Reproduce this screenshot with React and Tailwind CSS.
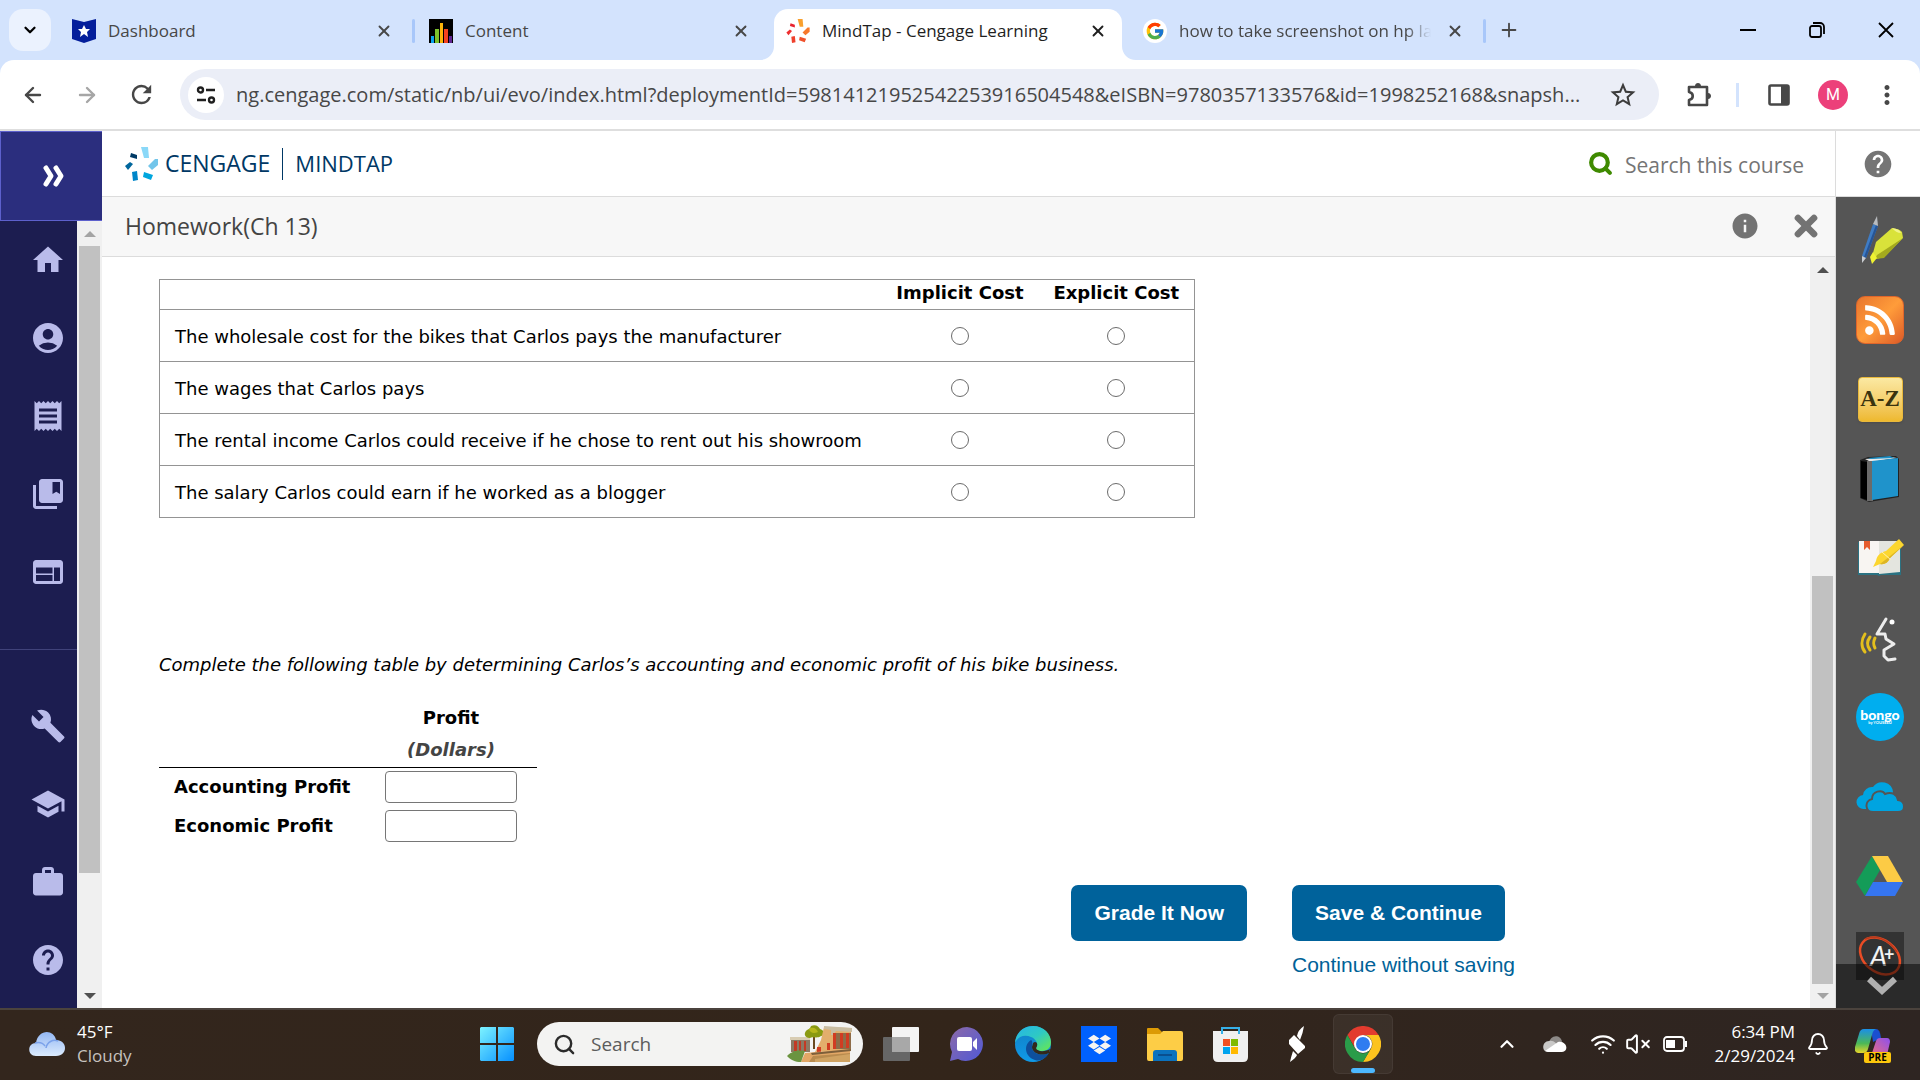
import { ArrowLeft, ArrowRight, Bell, ChevronDown, ChevronUp, Plus, Search, VolumeX, Wifi, X } from "lucide-react";
import {
  MdAccountCircle,
  MdBuild,
  MdCollectionsBookmark,
  MdHelp,
  MdHome,
  MdInfo,
  MdMoreVert,
  MdOutlineExtension,
  MdReceipt,
  MdRefresh,
  MdSchool,
  MdStarBorder,
  MdWeb,
  MdWork,
} from "react-icons/md";
import { FcGoogle } from "react-icons/fc";
import { FaDropbox, FaRss } from "react-icons/fa";

const COSTS = [
  "The wholesale cost for the bikes that Carlos pays the manufacturer",
  "The wages that Carlos pays",
  "The rental income Carlos could receive if he chose to rent out his showroom",
  "The salary Carlos could earn if he worked as a blogger",
];

const CengageMark = ({ colors, className }) => (
  <svg viewBox="0 0 33 34" className={className}>
    <path d="M16 0h7l1 11h-5z" fill={colors[0]} />
    <path d="M33 12v6l-6 5-4-4 7-7z" fill={colors[1]} />
    <path d="M19 25l9 3-2 5-8-3z" fill={colors[2]} />
    <path d="M7 25l5-1 1 9-5 1z" fill={colors[3]} />
    <path d="M0 19l5-4 3 2-5 6z" fill={colors[4]} />
    <path d="M6 6l6 2v4l-7-2z" fill={colors[5]} />
  </svg>
);

const ORANGES = ["#f9a02e", "#f7782b", "#f0512b", "#ef402c", "#ee2f30", "#e8212f"];
const BLUES = ["#8ad8f8", "#72c5ea", "#00a6de", "#0086c9", "#00669c", "#003a66"];

const ShieldIcon = () => (
  <svg viewBox="0 0 24 24" className="size-6">
    <path d="M0 0l12 3 12-3v20l-12 4-12-4z" fill="#041e9b" />
    <path d="M12 6l2 4h4l-3 3 1 5-4-3-4 3 1-5-3-3h4z" fill="#fff" />
  </svg>
);

const BarsIcon = () => (
  <svg viewBox="0 0 24 24" className="size-6">
    <path d="M0 0h24v24H0z" fill="#000" />
    <path d="M2 17h3v7H2z" fill="#0aa1ec" />
    <path d="M6 10h4v14H6z" fill="#7cc12c" />
    <path d="M11 4h3v20h-3z" fill="#fcb40a" />
    <path d="M15 10h4v14h-4z" fill="#f4421f" />
    <path d="M20 17h3v7h-3z" fill="#5f2590" />
  </svg>
);

const Flare = ({ className, d }) => (
  <svg viewBox="0 0 14 14" className={className}>
    <path d={d} fill="#fff" />
  </svg>
);

const Tab = ({ icon, title, active, separator, fade }) => (
  <div
    className={
      active
        ? "relative flex items-center w-[348px] mr-[9px] h-[51px] mt-[9px] pb-[8px] pl-3 bg-white rounded-t-[14px] text-[#1f1f1f]"
        : "relative flex items-center w-[357px] h-[51px] mt-[9px] pb-[8px] pl-3 text-[#474747]"
    }
  >
    {active && (
      <>
        <Flare className="absolute -left-[14px] bottom-0 size-[14px]" d="M14 0v14H0C8 14 14 8 14 0z" />
        <Flare className="absolute -right-[14px] bottom-0 size-[14px]" d="M0 0v14h14C6 14 0 8 0 0z" />
      </>
    )}
    {icon}
    <button
      className={`mx-3 text-left text-[17px] leading-6 whitespace-nowrap w-[252px] ${
        fade ? "[mask-image:linear-gradient(to_right,black_90%,transparent)]" : ""
      }`}
    >
      {title}
    </button>
    <button aria-label={`Close ${title}`} className="size-6 shrink-0 flex items-center justify-center">
      <X size={18} strokeWidth={2.5} />
    </button>
    {separator && <span className="ml-4 w-[3px] h-6 rounded-sm bg-[#a8c7fa]" />}
  </div>
);

const TabStrip = () => (
  <div className="flex h-[60px] shrink-0 bg-[#d3e3fd]">
    <button aria-label="Search tabs" className="m-[9px] size-[42px] shrink-0 rounded-[14px] bg-[#ebf2fe] flex items-center justify-center">
      <ChevronDown size={18} strokeWidth={3} />
    </button>
    <Tab icon={<ShieldIcon />} title="Dashboard" separator />
    <Tab icon={<BarsIcon />} title="Content" />
    <Tab icon={<CengageMark colors={ORANGES} className="size-6" />} title="MindTap - Cengage Learning" active />
    <Tab
      icon={
        <span className="size-6 shrink-0 rounded-full bg-white flex items-center justify-center">
          <FcGoogle size={20} />
        </span>
      }
      title="how to take screenshot on hp la"
      separator
      fade
    />
    <button aria-label="New tab" className="w-[42px] flex items-center justify-center text-[#474747]">
      <Plus size={22} />
    </button>
    <div className="ml-auto flex">
      <button aria-label="Minimize" className="w-[69px] flex items-center justify-center">
        <span className="w-4 h-[2px] bg-black" />
      </button>
      <button aria-label="Restore" className="w-[69px] flex items-center justify-center">
        <svg viewBox="0 0 16 16" className="size-4" fill="none" stroke="#000" strokeWidth="1.8">
          <rect x="1" y="4" width="11" height="11" rx="2" />
          <path d="M4 1h7a4 4 0 0 1 4 4v7" />
        </svg>
      </button>
      <button aria-label="Close window" className="w-[69px] flex items-center justify-center">
        <svg viewBox="0 0 16 16" className="size-4" stroke="#000" strokeWidth="1.8">
          <path d="M1 1l14 14M15 1L1 15" />
        </svg>
      </button>
    </div>
  </div>
);

const ToolButton = ({ label, children }) => (
  <button aria-label={label} className="w-[54px] h-full shrink-0 flex items-center justify-center text-[#474747]">
    {children}
  </button>
);

const Toolbar = () => (
  <div className="shrink-0 bg-[#d3e3fd]">
    <div className="flex items-center h-[71px] px-[6px] bg-white rounded-t-[14px] border-b-2 border-[#dedede]">
      <ToolButton label="Back"><ArrowLeft size={24} strokeWidth={2.4} /></ToolButton>
      <ToolButton label="Forward"><ArrowRight size={24} strokeWidth={2.4} className="text-[#a6a6a6]" /></ToolButton>
      <ToolButton label="Reload"><MdRefresh size={29} /></ToolButton>
      <div className="ml-3 flex flex-1 min-w-0 items-center h-[51px] rounded-full bg-[#ebeef7] pl-2 pr-[21px]">
        <button aria-label="Site information" className="size-9 shrink-0 rounded-full bg-white flex items-center justify-center">
          <svg viewBox="0 0 20 20" className="size-5" fill="none" stroke="#1f1f1f" strokeWidth="2.4">
            <circle cx="4.500" cy="5" r="2.500" />
            <path d="M10 5h9M1 15h9" />
            <circle cx="15.500" cy="15" r="2.500" />
          </svg>
        </button>
        <input
          aria-label="Address"
          readOnly
          className="ml-3 flex-1 min-w-0 bg-transparent text-xl text-[#474747] outline-none"
          value="ng.cengage.com/static/nb/ui/evo/index.html?deploymentId=59814121952542253916504548&eISBN=9780357133576&id=1998252168&snapsh..."
        />
        <button aria-label="Bookmark this tab" className="shrink-0 text-[#3c3c3c]"><MdStarBorder size={30} /></button>
      </div>
      <div className="ml-[13px] flex h-full items-center">
        <ToolButton label="Extensions">
          <svg viewBox="0 0 26 26" className="size-[26px]" fill="none" stroke="#474747" strokeWidth="2.600" strokeLinejoin="round">
            <path d="M3 5h18v18H3v-5c5-1 5-7 0-8z" />
            <path d="M9 4c0-4 6-4 6 0zM22 11c4 0 4 6 0 6z" fill="#474747" stroke="none" />
          </svg>
        </ToolButton>
        <span className="ml-[10px] mr-[13px] w-[3px] h-6 bg-[#d3e3fd]" />
        <ToolButton label="Side panel">
          <svg viewBox="0 0 22 22" className="size-[22px]">
            <rect x="1.500" y="1.500" width="19" height="19" rx="1.500" fill="none" stroke="#474747" strokeWidth="2.600" />
            <path d="M13 1h8v20h-8z" fill="#474747" />
          </svg>
        </ToolButton>
        <ToolButton label="Profile">
          <span className="size-[30px] rounded-full bg-[#ec407a] text-white text-base flex items-center justify-center font-[Roboto,sans-serif]">M</span>
        </ToolButton>
        <ToolButton label="Menu"><MdMoreVert size={30} /></ToolButton>
      </div>
    </div>
  </div>
);

const RailItem = ({ label, icon: Icon }) => (
  <button aria-label={label} className="flex h-[78px] w-full shrink-0 items-center justify-center pl-[19px] text-[#b9bbea]">
    <Icon size={36} />
  </button>
);

const ScrollTrack = ({ className = "", thumb, upColor, downColor }) => (
  <div className={`flex w-[25px] shrink-0 flex-col bg-[#f0f0f0] px-[2px] ${className}`}>
    <div className="flex h-[25px] shrink-0 items-center justify-center">
      <svg viewBox="0 0 12 6" className="w-3 h-[6px]"><path d="M0 6l6-6 6 6z" fill={upColor} /></svg>
    </div>
    <div className={`flex flex-1 flex-col min-h-0 ${thumb}`}>
      <div className="bg-[#c1c1c1] h-full" />
    </div>
    <div className="flex h-6 shrink-0 items-center justify-center">
      <svg viewBox="0 0 12 6" className="w-3 h-[6px]"><path d="M0 0l6 6 6-6z" fill={downColor} /></svg>
    </div>
  </div>
);

const CourseRail = () => (
  <aside className="flex w-[102px] shrink-0 flex-col">
    <button aria-label="Expand navigation" className="h-[90px] shrink-0 bg-[#2b2e7e] border border-[#5d60cc] border-r-0 flex items-center justify-center">
      <svg viewBox="0 0 24 24" className="ml-1 size-6" fill="none" stroke="#fff" strokeWidth="5" strokeLinecap="round" strokeLinejoin="round">
        <path d="M4 4l5 8-5 8M14 4l5 8-5 8" />
      </svg>
    </button>
    <div className="flex flex-1 min-h-0">
      <nav className="flex-1 overflow-hidden bg-[#1c1d50]">
        <RailItem label="Home" icon={MdHome} />
        <RailItem label="Account" icon={MdAccountCircle} />
        <RailItem label="Orders" icon={MdReceipt} />
        <RailItem label="Library" icon={MdCollectionsBookmark} />
        <RailItem label="Dashboard" icon={MdWeb} />
        <hr className="mt-[38px] mb-[37px] border-[#40427a]" />
        <RailItem label="Tools" icon={MdBuild} />
        <RailItem label="College success" icon={MdSchool} />
        <RailItem label="Career" icon={MdWork} />
        <RailItem label="Help" icon={MdHelp} />
      </nav>
      <ScrollTrack thumb="pb-[111px]" upColor="#a3a3a3" downColor="#505050" />
    </div>
  </aside>
);

const CostTable = () => (
  <table className="w-[1036px] table-fixed border-collapse border border-[#949494]">
    <thead>
      <tr className="h-[30px] border-b border-[#949494]">
        <th className="w-[722px]" />
        <th className="w-[157px] pb-1 leading-6">Implicit Cost</th>
        <th className="pb-1 leading-6">Explicit Cost</th>
      </tr>
    </thead>
    <tbody>
      {COSTS.map((cost) => (
        <tr key={cost} className="h-[52px] border-b border-[#949494]">
          <td className="pl-[15px] pt-[2px] whitespace-nowrap">{cost}</td>
          {["Implicit Cost", "Explicit Cost"].map((kind) => (
            <td key={kind} className="text-center">
              <input
                type="radio"
                name={cost}
                aria-label={`${kind}: ${cost}`}
                className="mx-auto block size-[18px] appearance-none rounded-full border border-[#6b6b6b] bg-white"
              />
            </td>
          ))}
        </tr>
      ))}
    </tbody>
  </table>
);

const ProfitTable = () => (
  <table className="mt-[22px] w-[378px] table-fixed border-collapse">
    <thead>
      <tr className="h-[33px]">
        <th className="w-[206px]" />
        <th>Profit</th>
      </tr>
      <tr className="h-[33px] border-b border-black">
        <th />
        <th className="italic text-[#444]">(Dollars)</th>
      </tr>
    </thead>
    <tbody>
      {["Accounting Profit", "Economic Profit"].map((name) => (
        <tr key={name} className="h-[39px]">
          <th className="pl-[15px] text-left whitespace-nowrap">
            <label htmlFor={name}>{name}</label>
          </th>
          <td>
            <input id={name} type="text" className="mx-auto block h-8 w-[132px] rounded-[4px] border border-[#767676] px-2" />
          </td>
        </tr>
      ))}
    </tbody>
  </table>
);

const Homework = () => (
  <div className="flex flex-1 min-h-0">
    <div className="flex-1 min-w-0 overflow-hidden pl-[57px] pt-[22px] text-lg leading-7 text-black font-['DejaVu_Sans',Verdana,sans-serif]">
      <CostTable />
      <p className="mt-[133px] italic">
        Complete the following table by determining Carlos’s accounting and economic profit of his bike business.
      </p>
      <ProfitTable />
      <div className="mt-10 flex max-w-[1356px] justify-end gap-[45px] text-[21px] font-['Liberation_Sans',Arial,sans-serif]">
        <button className="h-14 rounded-[7px] bg-[#00629b] px-[23px] font-bold text-white">Grade It Now</button>
        <div className="flex flex-col items-start">
          <button className="h-14 rounded-[7px] bg-[#00629b] px-[23px] font-bold text-white">Save &amp; Continue</button>
          <a href="#" className="mt-[10px] text-[#006298]">Continue without saving</a>
        </div>
      </div>
    </div>
    <ScrollTrack thumb="pt-[294px]" upColor="#505050" downColor="#a3a3a3" />
  </div>
);

const CourseHeader = () => (
  <header className="flex h-[66px] shrink-0 items-center border-b border-[#dcdcdc] pl-[23px] pr-[24px]">
    <CengageMark colors={BLUES} className="h-[34px] w-[33px]" />
    <span className="ml-[7px] text-[23px] font-medium text-[#003865]">CENGAGE</span>
    <span className="mx-3 h-8 w-px bg-[#003865]" />
    <span className="text-[22px] font-medium text-[#003865]">MINDTAP</span>
    <div className="ml-auto flex items-center">
      <Search size={25} strokeWidth={4} color="#3f8a00" />
      <input
        type="text"
        aria-label="Search this course"
        placeholder="Search this course"
        className="ml-[12px] w-[186px] pt-1 text-[21px] placeholder:text-[#757575] outline-none"
      />
    </div>
  </header>
);

const ActivityBar = () => (
  <div className="flex h-[60px] shrink-0 items-center border-b border-[#dcdcdc] bg-[#f7f7f7] pb-px pl-[23px] pr-[13px]">
    <h1 className="text-[23px] text-[#444]">Homework(Ch 13)</h1>
    <button aria-label="Activity information" className="ml-auto text-[#737373]"><MdInfo size={30} /></button>
    <button aria-label="Close activity" className="ml-[30px] text-[#737373]"><X size={32} strokeWidth={5} /></button>
  </div>
);

const PenIcon = () => (
  <svg viewBox="0 0 48 48" className="size-12">
    <path d="M17 8l5 2L10 42l-4-2z" fill="#3f7cc4" />
    <path d="M20 9l2 1-12 32-2-1z" fill="#275596" />
    <path d="M17 8l4-8 1 10z" fill="#b9bcc0" />
    <path d="M6 40l4 2-4 5z" fill="#c9ccd0" />
    <path d="M36 12q8 1 10 4l1 6-19 19-8 2-3-6 3-11z" fill="#d9e23a" />
    <path d="M47 22L28 42l-9 1 2-4z" fill="#a4aa1e" />
    <path d="M36 12q8 1 9 5-5 0-9-5z" fill="#f0f38a" />
    <path d="M17 36l4 6-5 6-2-7z" fill="#eff232" />
  </svg>
);

const BookIcon = () => (
  <svg viewBox="0 0 48 48" className="size-12">
    <path d="M4 5l8-3 28-1 3 3v38L13 47l-9-4z" fill="#222" />
    <path d="M9 4l26-2 6 1-26 4z" fill="#e9e9e9" />
    <path d="M12 3l22-2 4 2-23 1z" fill="#1e8fc4" />
    <path d="M11 6h6v40h-6z" fill="#6a6a6a" />
    <path d="M16 6l26-3v38l-26 4z" fill="#1f93cb" />
    <path d="M5 6l6 1v38l-6-2z" fill="#000" />
  </svg>
);

const NoteIcon = () => (
  <svg viewBox="0 0 48 48" className="size-12">
    <path d="M2 8h43v33H25l-2 1-2-1H2z" fill="#2b7282" />
    <path d="M3 7h20v32H3z" fill="#f8f5f2" />
    <path d="M23 7h21v31l-21 2z" fill="#e4e5df" />
    <path d="M8 7h6v9l-3-3-3 3z" fill="#e65c2d" />
    <path d="M43 5l5 6-14 13c-2 5-6 7-10 6l-7 3 3-6c1-6 5-9 10-10z" fill="#fcd62f" />
    <path d="M48 11L34 24c-2 5-6 7-10 6z" fill="#dcb526" />
    <path d="M26 18l9 8" stroke="#fff3b0" />
  </svg>
);

const SpeakIcon = () => (
  <svg viewBox="0 0 48 48" className="size-12" fill="none" strokeLinecap="round">
    <path d="M30 5l-9 15h8l1 5 8 5-10 6v6l4 4 7-1" stroke="#ececec" strokeWidth="3" strokeLinejoin="round" />
    <circle cx="36" cy="8" r="2.500" fill="#fff" />
    <path d="M9 20c-4 6-4 13 0 18M14 23c-3 4-3 9 0 13M19 24c-2 4-2 6 0 10" stroke="#e3bf1d" strokeWidth="3" />
  </svg>
);

const CloudsIcon = () => (
  <svg viewBox="0 0 48 48" className="size-12">
    <path d="M8 36a7 7 0 0 1-1-14 9 9 0 0 1 10-8 11 11 0 0 1 20 5L27 36z" fill="#00a4e0" />
    <path d="M17 39c-8 0-9-11-1-13 0-8 10-10 13-5 7-3 12 1 13 6 8 1 8 12 0 12z" fill="#00a4e0" stroke="#555" strokeWidth="2" />
  </svg>
);

const DriveIcon = () => (
  <svg viewBox="0 0 48 48" className="size-12">
    <path d="M16 4l8 14L9 44 0 30z" fill="#149c58" />
    <path d="M16 4h16l15 26H31z" fill="#fccb45" />
    <path d="M17 30h30l-8 14H9z" fill="#3575f0" />
  </svg>
);

const GradeIcon = () => (
  <svg viewBox="0 0 48 48" className="size-12 bg-[#333]">
    <ellipse cx="24" cy="24" rx="22" ry="16" transform="rotate(38 24 24)" fill="none" stroke="#e84c25" strokeWidth="2.500" />
    <path d="M9 7c12-5 24 1 32 13" fill="none" stroke="#b93a1c" strokeWidth="1.500" />
    <text x="14" y="34" fontSize="27" fontStyle="italic" fill="#f4f4f4" fontFamily="Lato, sans-serif">A</text>
    <text x="28" y="29" fontSize="18" fontWeight="700" fill="#f4f4f4" fontFamily="Lato, sans-serif">+</text>
  </svg>
);

const ToolRail = () => (
  <aside className="flex w-[85px] shrink-0 flex-col border-l border-[#dcdcdc]">
    <div className="flex h-[66px] shrink-0 items-center justify-center border-b border-[#dcdcdc]">
      <button aria-label="Help" className="text-[#757575]"><MdHelp size={32} /></button>
    </div>
    <div className="relative flex flex-1 min-h-0 flex-col items-center justify-between bg-[#555] pt-[19px] pb-[28px] pl-[4px]">
      <button aria-label="Highlights"><PenIcon /></button>
      <button aria-label="RSS feed" className="flex size-12 items-center justify-center rounded-[9px] border border-[#e0662b] bg-linear-to-br from-[#e8752e] via-[#ff9c3a] to-[#dc5a28] text-white">
        <FaRss size={34} />
      </button>
      <button aria-label="Glossary" className="flex size-12 items-center justify-center">
        <span className="flex size-[45px] items-center justify-center rounded-[4px] border border-[#e9b93c] bg-linear-to-b from-[#fbe9a2] to-[#eeb92d] text-[23px] font-bold text-[#3a330f] shadow font-['Liberation_Serif',serif] whitespace-nowrap">
          A-Z
        </span>
      </button>
      <button aria-label="Book"><BookIcon /></button>
      <button aria-label="Notes"><NoteIcon /></button>
      <button aria-label="Read aloud"><SpeakIcon /></button>
      <button aria-label="Bongo" className="flex size-12 flex-col items-center justify-center rounded-full bg-[#00aeef] text-white font-[Lato,sans-serif]">
        <span className="text-sm leading-3 font-black">bongo</span>
        <span className="text-[4px] leading-1 font-bold">by YOUSEEU</span>
      </button>
      <button aria-label="OneDrive"><CloudsIcon /></button>
      <button aria-label="Google Drive"><DriveIcon /></button>
      <button aria-label="Grades"><GradeIcon /></button>
      <button aria-label="Scroll tools down" className="absolute inset-x-0 bottom-0 flex h-11 items-center justify-center bg-black/50 pl-2">
        <svg viewBox="0 0 30 20" className="h-5 w-[30px]" fill="none" stroke="#b0b0b0" strokeWidth="6">
          <path d="M2 3l13 12L28 3" />
        </svg>
      </button>
    </div>
  </aside>
);

const TaskButton = ({ label, children }) => (
  <button aria-label={label} className="flex h-full w-[66px] shrink-0 items-center justify-center">{children}</button>
);

const StartIcon = () => (
  <svg viewBox="0 0 36 36" className="size-9">
    <defs>
      <linearGradient id="start" x1="0" y1="0" x2="1" y2="1">
        <stop offset="0" stopColor="#7df3ff" />
        <stop offset="1" stopColor="#0690ff" />
      </linearGradient>
    </defs>
    <path d="M2 1h15v16H1V2zM19 1h15l1 1v15H19zM1 19h16v16H2l-1-1zM19 19h16v15l-1 1H19z" fill="url(#start)" />
  </svg>
);

const WeatherIcon = () => (
  <svg viewBox="0 0 36 24" className="h-6 w-9">
    <defs>
      <linearGradient id="cloud" x1="0" y1="0" x2="0" y2="1">
        <stop offset="0" stopColor="#93b7f3" />
        <stop offset="1" stopColor="#dcebfd" />
      </linearGradient>
    </defs>
    <path d="M7 24C-2 24-2 11 7 11 9-3 25-3 27 8c12 0 12 16 0 16z" fill="url(#cloud)" />
    <path d="M17 16c1-6 7-9 12-7M6 11c4-1 8 0 10 3" fill="none" stroke="#7ba2ea" strokeWidth="1.500" />
  </svg>
);

const TempleArt = () => (
  <svg viewBox="0 0 66 38" className="h-[38px] w-[66px]">
    <path d="M4 13h19v14H4z" fill="#8b7a64" />
    <path d="M3 12h20v3H3z" fill="#d8ccb2" />
    <path d="M7 16h3v10H7zM12 16h2v10h-2zM17 16h2v10h-2z" fill="#c33a24" />
    <path d="M26 10h2v14h-2z" fill="#6b4a20" />
    <path d="M18 8c1-4 5-3 6-7 5-2 8 1 9 3 5 1 5 7 1 7-4 3-9 0-11 2-3 0-6-2-5-5z" fill="#8a9a12" />
    <path d="M22 4c4-3 8 0 9 3-4 2-8 1-9-3z" fill="#b7b81c" />
    <path d="M37 2l27 1v22l-36 2 6-12z" fill="#e3ae6c" />
    <path d="M46 8h18v16H46z" fill="#8e6c48" />
    <path d="M37 1l28 2v4l-16-1-3 4h-2V5l-7-1z" fill="#c9bda2" />
    <path d="M46 8h3v16h-3zM53 8h3v15h-3zM59 8h3v15h-3zM40 18h3v7h-3zM30 22h4v5h-4z" fill="#d13c22" />
    <path d="M18 28l45-4v13H14z" fill="#e2a766" />
    <path d="M24 28l40-4v2l-39 4z" fill="#7d5f3a" />
    <path d="M26 31l37-3v9H22z" fill="#b98b4e" />
    <path d="M28 34l35-5v8H28z" fill="#d0a362" />
    <path d="M0 31c6-6 12-6 18-5l-4 11C8 37 4 35 0 31z" fill="#6b9440" />
  </svg>
);

const TaskViewIcon = () => (
  <svg viewBox="0 0 36 36" className="size-9">
    <rect x="0" y="11" width="27" height="24" rx="1" fill="#666" />
    <rect x="9" y="1" width="27" height="25" rx="1" fill="#f4f4f4" />
    <path d="M9 11h18v15H9z" fill="#a8a8a8" />
  </svg>
);

const ChatIcon = () => (
  <svg viewBox="0 0 36 36" className="size-9">
    <defs>
      <linearGradient id="chat" x1="0" y1="0" x2="1" y2="1">
        <stop offset="0" stopColor="#8d6aa8" />
        <stop offset="1" stopColor="#5059d6" />
      </linearGradient>
    </defs>
    <path d="M18 1a17 17 0 1 1-9 32l-8 2 2-9A17 17 0 0 1 18 1z" fill="url(#chat)" />
    <rect x="8" y="11" width="15" height="14" rx="2" fill="#fff" />
    <path d="M24 16l4-4v12l-4-4z" fill="#fff" />
  </svg>
);

const EdgeIcon = () => (
  <svg viewBox="0 0 36 36" className="size-9">
    <defs>
      <linearGradient id="edgeTop" x1="0" y1="0" x2="1" y2="1">
        <stop offset="0" stopColor="#26b4e8" />
        <stop offset="0.500" stopColor="#2ec9c4" />
        <stop offset="1" stopColor="#6bea4a" />
      </linearGradient>
      <linearGradient id="edgeBody" x1="0" y1="0" x2="0" y2="1">
        <stop offset="0" stopColor="#127fc4" />
        <stop offset="1" stopColor="#0f9ae8" />
      </linearGradient>
    </defs>
    <circle cx="18" cy="18" r="18" fill="url(#edgeBody)" />
    <path d="M0 17C1 6 9 0 18 0c11 0 18 8 18 16 0 6-4 9-9 9-4 0-7-1-6-3 3-4 0-9-5-11C10 8 3 10 0 17z" fill="url(#edgeTop)" />
    <path d="M16 14c-8 5-6 17 4 20 6 2 11-2 14-7-8 4-18 0-17-7 0-3 1-5-1-6z" fill="#0e4f9c" />
    <path d="M18 17c3-3 6 1 3 5 1 4 9 4 14 1l-1 4c-8 4-17 0-17-6z" fill="#33281c" />
  </svg>
);

const FolderIcon = () => (
  <svg viewBox="0 0 36 36" className="size-9">
    <path d="M0 3q0-1 1-1h10l4 4v6H0z" fill="#dc9a05" />
    <path d="M0 8h13l3-3h18q2 0 2 2v26q0 2-2 2H2q-2 0-2-2z" fill="#fdcd46" />
    <path d="M6 35V27q0-3 3-3h18q3 0 3 3v8z" fill="#0b72be" />
    <path d="M11 29h14" stroke="#0a4f8f" strokeWidth="2" />
  </svg>
);

const StoreIcon = () => (
  <svg viewBox="0 0 36 36" className="size-9">
    <path d="M0 5h35v26q0 5-5 5H5q-5 0-5-5z" fill="#f0f0f0" />
    <path d="M9 8V2h17v6" fill="none" stroke="#36b0e8" strokeWidth="2" />
    <path d="M10 13h7v7h-7z" fill="#f25022" />
    <path d="M18 13h7v7h-7z" fill="#7fba00" />
    <path d="M10 21h7v7h-7z" fill="#00a4ef" />
    <path d="M18 21h7v7h-7z" fill="#ffb900" />
  </svg>
);

const BoltIcon = () => (
  <svg viewBox="0 0 18 36" className="h-9 w-[18px]" fill="#fff">
    <path d="M16 0Q10 4 9 10l3 4q3-7 4-14zM6 9L1 14v4l9 10 7-6v-2zM2 36q6-4 7-7l-4-4q-2 6-3 11z" />
  </svg>
);

const ChromeIcon = () => (
  <svg viewBox="0 0 36 36" className="size-9">
    <path d="M2.400 9A18 18 0 0 1 33.600 9H18l-8 13z" fill="#e33b2e" />
    <path d="M33.600 9A18 18 0 0 1 18 36l8-13.500A9 9 0 0 0 18 9z" fill="#fcc31e" />
    <path d="M2.400 9A18 18 0 0 0 18 36l8-13.500c-4 7-13 6-16 0z" fill="#2a9c49" />
    <circle cx="18" cy="18" r="9" fill="#fff" />
    <circle cx="18" cy="18" r="7" fill="#2f7cf0" />
  </svg>
);

const CopilotIcon = () => (
  <svg viewBox="0 0 35 30" className="h-[30px] w-[35px]">
    <defs>
      <linearGradient id="pilotLeft" x1="0" y1="0" x2="0" y2="1">
        <stop offset="0" stopColor="#1a8fe8" />
        <stop offset="0.600" stopColor="#4cb857" />
        <stop offset="1" stopColor="#e8d52a" />
      </linearGradient>
      <linearGradient id="pilotRight" x1="1" y1="0" x2="0" y2="1">
        <stop offset="0" stopColor="#8d50ee" />
        <stop offset="1" stopColor="#ff7468" />
      </linearGradient>
    </defs>
    <path d="M16 0h5q4 0 5 9l-8 4z" fill="#1a4fd0" />
    <path d="M9 0h12q-3 1-4 6l-4 14q-1 4-5 4H3q-4 0-3-6L4 5Q5 0 9 0z" fill="url(#pilotLeft)" />
    <path d="M25 9h7q3 0 3 4l-3 13q-1 4-4 4H12q4-1 5-6l4-12q1-3 4-3z" fill="url(#pilotRight)" />
  </svg>
);

const Taskbar = () => (
  <footer className="flex h-[72px] shrink-0 items-stretch border-t-2 border-[#4b433d] bg-linear-to-r from-[#33261d] via-[#33251a] via-50% to-[#2e2522] pb-[2px] text-[17px] leading-6 text-white">
    <button className="flex w-[464px] items-center pl-[29px] text-left">
      <WeatherIcon />
      <span className="ml-3 flex flex-col">
        <span>45°F</span>
        <span className="text-[#c6c2bf]">Cloudy</span>
      </span>
    </button>
    <TaskButton label="Start"><StartIcon /></TaskButton>
    <div className="ml-[7px] mr-[5px] flex h-11 w-[326px] shrink-0 items-center self-center rounded-full bg-[#f3f3f2] pl-4 pr-[10px] text-[#555]">
      <Search size={23} strokeWidth={2.5} color="#2b2b2b" />
      <input
        type="text"
        aria-label="Search Windows"
        placeholder="Search"
        className="ml-[15px] min-w-0 flex-1 bg-transparent text-[19px] outline-none placeholder:text-[#5c5c5c]"
      />
      <TempleArt />
    </div>
    <TaskButton label="Task view"><TaskViewIcon /></TaskButton>
    <TaskButton label="Chat"><ChatIcon /></TaskButton>
    <TaskButton label="Edge"><EdgeIcon /></TaskButton>
    <TaskButton label="Dropbox">
      <span className="flex size-9 items-center justify-center bg-[#0061fe] text-[#f7f5f2]"><FaDropbox size={23} /></span>
    </TaskButton>
    <TaskButton label="File Explorer"><FolderIcon /></TaskButton>
    <TaskButton label="Microsoft Store"><StoreIcon /></TaskButton>
    <TaskButton label="Shortcuts"><BoltIcon /></TaskButton>
    <TaskButton label="Chrome">
      <span className="relative flex size-[60px] items-center justify-center rounded-md border border-white/5 bg-white/5">
        <ChromeIcon />
        <span className="absolute bottom-0 h-[5px] w-6 rounded-full bg-[#4cb8ff]" />
      </span>
    </TaskButton>
    <div className="ml-auto flex items-center pr-[30px]">
      <button aria-label="Show hidden icons"><ChevronUp size={22} strokeWidth={2.4} /></button>
      <button aria-label="OneDrive" className="ml-[25px]">
        <svg viewBox="0 0 24 16" className="h-4 w-6">
          <path d="M6 9C6-2 18-2 19 6z" fill="#8d8a88" />
          <path d="M5 16c-7 0-6-11 1-11 5-1 8 3 9 5z" fill="#c9c8c7" />
          <path d="M2 15l13-9c8-2 12 9 4 10H5z" fill="#fff" />
        </svg>
      </button>
      <button aria-label="Network" className="ml-[23px]"><Wifi size={26} strokeWidth={2} /></button>
      <button aria-label="Volume" className="ml-[9px]"><VolumeX size={26} strokeWidth={1.8} /></button>
      <button aria-label="Battery" className="ml-[12px]">
        <svg viewBox="0 0 24 16" className="h-4 w-6">
          <rect x="1" y="1" width="20" height="14" rx="3" fill="none" stroke="#fff" strokeWidth="1.800" />
          <path d="M3 4h9v8H3z" fill="#fff" />
          <path d="M22 5h2v6h-2z" fill="#fff" />
        </svg>
      </button>
      <button className="ml-[27px] flex flex-col items-end">
        <span>6:34 PM</span>
        <span>2/29/2024</span>
      </button>
      <button aria-label="Notifications" className="ml-[11px]"><Bell size={24} strokeWidth={1.8} /></button>
      <button aria-label="Copilot preview" className="relative ml-[25px] h-[35px] w-[35px]">
        <CopilotIcon />
        <span className="absolute -right-px -bottom-px flex h-[11px] w-[27px] items-center justify-center rounded-xs bg-[#fdc70c] text-[10px] font-bold leading-none text-black">PRE</span>
      </button>
    </div>
  </footer>
);

export default function App() {
  return (
    <div className="flex h-screen flex-col overflow-hidden bg-white font-['Open_Sans','Noto_Sans',sans-serif]">
      <TabStrip />
      <Toolbar />
      <div className="flex flex-1 min-h-0">
        <CourseRail />
        <main className="flex flex-1 min-w-0 flex-col">
          <CourseHeader />
          <ActivityBar />
          <Homework />
        </main>
        <ToolRail />
      </div>
      <Taskbar />
    </div>
  );
}
